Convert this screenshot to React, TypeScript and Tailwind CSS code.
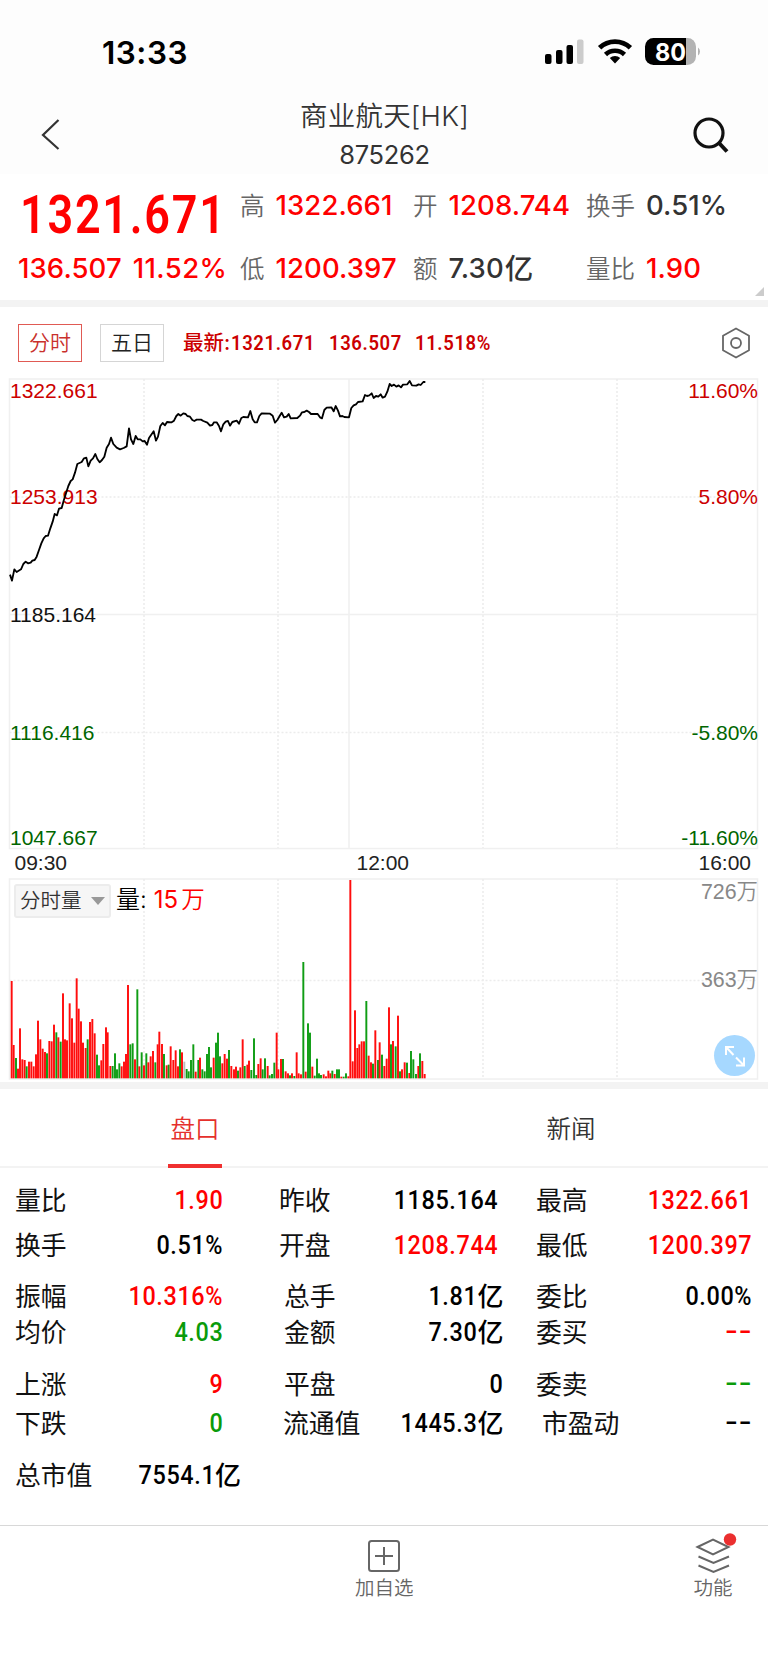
import React from 'react';

// Minute line, in thirds of a pixel from the chart's top left corner
const priceLine =
    '30,614 36,632 43,598 50,606 63,598 70,582 77,575 84,580 92,578 97,572 104,570 110,560 117,540 124,520 131,505 137,498 144,497 151,475 158,455 164,432 171,436 177,416 185,414 191,392 198,370 205,348 212,333 218,328 225,308 232,282 245,276 252,265 259,263 265,289 272,272 279,265 286,252 292,267 299,277 306,270 313,260 320,233 327,222 333,203 340,222 350,233 360,238 371,234 380,229 387,175 393,208 400,222 407,198 413,208 421,208 428,214 434,213 441,224 447,204 461,184 468,212 474,200 481,168 488,159 495,166 501,156 515,157 522,152 529,138 535,132 542,137 550,130 557,132 562,138 570,140 577,150 583,153 590,149 603,149 610,153 622,158 630,167 637,165 642,157 650,157 657,168 663,184 670,163 677,155 684,153 690,167 697,156 710,152 717,161 724,144 730,141 744,142 751,123 758,148 764,157 771,157 778,138 785,130 810,131 818,137 825,158 832,150 839,138 845,128 852,142 860,140 866,132 872,145 892,144 900,137 906,127 913,126 920,122 927,126 933,132 953,132 960,142 966,145 973,120 980,113 994,112 1001,124 1007,108 1014,122 1020,139 1027,138 1033,141 1047,142 1054,114 1061,106 1068,103 1074,96 1088,94 1095,75 1101,78 1108,76 1115,70 1121,84 1128,78 1135,80 1142,73 1148,83 1155,80 1162,65 1169,42 1175,48 1182,44 1189,50 1196,46 1203,52 1209,44 1222,43 1229,33 1236,46 1249,47 1256,43 1262,45 1270,36 1276,36';

// Volume bars as "x,top" plus r(ise), g(fall) or n(eutral), same units
const volumeBars =
    '35,333r 41,525r 48,564g 54,596r 60,475r 67,568r 74,570r 80,589g 87,575r 94,575r 101,589r 108,553r 114,452r 121,508r 128,536r 135,546r 141,550g 148,513r 155,514r 162,464r 169,487g 175,502r 182,515g 189,370r 195,508r 201,511r 209,400r 216,445r 223,518r 230,325r 236,416r 243,454r 249,518r 257,534r 263,508g 270,456r 277,447r 284,490r 291,554g 297,586g 304,571r 310,522r 318,472r 323,487r 331,588r 338,588g 345,550g 351,598g 358,580g 365,589r 372,575r 378,552r 384,345r 391,523g 398,520g 405,568r 412,358g 418,589r 425,547g 432,586r 439,550g 445,577r 452,559r 459,543r 466,577g 473,523r 478,485r 486,522r 492,552g 500,586r 506,584g 512,529r 520,570r 527,541r 534,589r 540,538g 546,547r 553,575n 560,597g 566,604g 573,570g 580,523g 587,605r 595,570g 600,563r 607,598g 614,604g 621,552g 627,531g 633,592g 641,563r 648,518g 654,488g 660,559g 667,580r 674,552r 681,566r 687,540g 694,588r 702,598r 708,590r 714,602g 721,592r 728,508r 734,588g 742,584r 747,572r 754,600g 762,505g 769,615g 775,582r 782,565r 788,598g 795,565g 803,588r 809,616g 816,612g 823,578g 830,488r 835,598r 843,567r 849,567g 857,604r 864,610r 870,616g 876,610r 883,618g 890,547r 896,610r 903,613r 910,276g 917,605r 924,460g 930,488g 937,590r 944,617g 951,566g 957,610g 963,615g 971,613r 978,619r 985,602r 991,610r 997,602g 1004,612r 1011,598g 1017,598g 1024,620r 1031,620g 1038,610g 1045,619r 1051,30r 1058,574r 1065,421r 1072,534r 1078,523r 1085,514r 1092,514r 1099,393g 1106,557r 1113,577r 1119,581g 1126,481r 1134,570g 1139,517r 1146,554g 1153,588r 1160,566r 1167,412r 1173,523g 1179,513r 1187,529g 1194,437r 1200,604g 1206,598r 1214,577r 1221,578g 1228,609r 1233,543g 1240,568g 1248,612g 1255,588r 1260,550g 1267,573r 1274,612r';

const barColors: Record<string, string> = { r: '#ff0d0d', g: '#0f9d14', n: '#bbbbbb' };

const bars = volumeBars.split(' ').map((item) => {
    const [x, top] = item.slice(0, -1).split(',').map(Number);
    return { x, top, fill: barColors[item.slice(-1)] };
});

interface Cell {
    label: string;
    value: string;
    unit?: string;
    color?: string;
    box: string;
}

const RED = 'text-[#ff0000]';
const GREEN = 'text-[#0a9b0a]';
const FIRST = 'ml-[15px] w-[208.500px]';
const THIRD = 'ml-[32.500px] w-[216.500px]';

const rows: { top: string; cells: Cell[] }[] = [
    {
        top: 'mt-[14px]',
        cells: [
            { label: '量比', value: '1.90', color: RED, box: FIRST },
            { label: '昨收', value: '1185.164', box: 'ml-[55.500px] w-[219px]' },
            { label: '最高', value: '1322.661', color: RED, box: 'ml-[38px] w-[216.500px]' },
        ],
    },
    {
        top: 'mt-[9px]',
        cells: [
            { label: '换手', value: '0.51%', color: 'text-black', box: FIRST },
            { label: '开盘', value: '1208.744', color: RED, box: 'ml-[55.500px] w-[219px]' },
            { label: '最低', value: '1200.397', color: RED, box: 'ml-[38px] w-[216.500px]' },
        ],
    },
    {
        top: 'mt-[15px]',
        cells: [
            { label: '振幅', value: '10.316%', color: RED, box: FIRST },
            { label: '总手', value: '1.81', unit: '亿', box: 'ml-[60.500px] w-[219.500px]' },
            { label: '委比', value: '0.00%', box: THIRD },
        ],
    },
    {
        top: 'mt-0',
        cells: [
            { label: '均价', value: '4.03', color: GREEN, box: FIRST },
            { label: '金额', value: '7.30', unit: '亿', box: 'ml-[60.500px] w-[219.500px]' },
            { label: '委买', value: '--', color: RED, box: THIRD },
        ],
    },
    {
        top: 'mt-[16px]',
        cells: [
            { label: '上涨', value: '9', color: RED, box: FIRST },
            { label: '平盘', value: '0', box: 'ml-[60.500px] w-[219.500px]' },
            { label: '委卖', value: '--', color: GREEN, box: THIRD },
        ],
    },
    {
        top: 'mt-[3px]',
        cells: [
            { label: '下跌', value: '0', color: GREEN, box: FIRST },
            { label: '流通值', value: '1445.3', unit: '亿', box: 'ml-[59.500px] w-[220.500px]' },
            { label: '市盈动', value: '--', box: 'ml-[38.500px] w-[210.500px]' },
        ],
    },
    {
        top: 'mt-[16px]',
        cells: [{ label: '总市值', value: '7554.1', unit: '亿', box: 'ml-[15px] w-[226px]' }],
    },
];

const StatusBar = () => (
    <div className="flex h-[102px] items-start pl-[102px] pr-[67px] pt-[33px]">
        <span className="text-[31.500px] font-semibold leading-[40px] tracking-[0.5px] text-black">13:33</span>
        <svg className="ml-auto mt-1" width="157" height="30" viewBox="544 37 157 30">
            <rect x="545" y="54" width="6.5" height="10" rx="2" />
            <rect x="556" y="50" width="6.5" height="14" rx="2" />
            <rect x="566.5" y="45" width="6.5" height="19" rx="2" />
            <rect x="577" y="39.5" width="6.5" height="24.5" rx="2" fill="#cccccc" />
            <path d="M615 63.5l-5.2-5.4a7.6 7.6 0 0 1 10.4 0z" />
            <path d="M605.5 54.5a13.8 13.8 0 0 1 19 0" fill="none" stroke="#000" strokeWidth="4.6" />
            <path d="M599.6 47.8a22.2 22.2 0 0 1 30.8 0" fill="none" stroke="#000" strokeWidth="4.8" />
            <path d="M653.500 38H686V65H653.500A8.500 8.500 0 0 1 645 56.500V46.500A8.500 8.500 0 0 1 653.500 38z" />
            <path d="M686 38h1.500a8.500 8.500 0 0 1 8.500 8.500v10a8.500 8.500 0 0 1-8.500 8.500H686z" fill="#b3b3b3" />
            <path d="M698 47.500a5 5 0 0 1 0 8z" fill="#b3b3b3" />
            <text x="655" y="60.500" fontSize="24.500" fontWeight="700" fill="#fff" textLength="31" lengthAdjust="spacingAndGlyphs">
                80
            </text>
        </svg>
    </div>
);

const TitleBar = () => (
    <div className="flex h-[72px] items-start justify-between pl-[40px] pr-[38px] text-[#333]">
        <svg className="mt-[16px]" width="20" height="32" viewBox="0 0 20 32" fill="none" stroke="#333" strokeWidth="2.200">
            <path d="M18.500 2L3 17l15.500 14" />
        </svg>
        <div className="flex flex-col items-center pl-[17px] pt-px">
            <h1 className="h-[28px] whitespace-nowrap text-[27.500px] font-[350] leading-[27px] tracking-[0.2px]">商业航天[HK]</h1>
            <span className="mt-[8px] text-[25.500px] font-normal leading-[32px] tracking-[-0.3px]">875262</span>
        </div>
        <svg className="mt-[14px]" width="38" height="38" viewBox="0 0 38 38" fill="none" stroke="#111" strokeWidth="3.200">
            <circle cx="17" cy="17" r="14" />
            <path d="M27 27l8 8.500" strokeWidth="4" />
        </svg>
    </div>
);

const Quote = ({ label, value, unit, color, box }: { label: string; value: string; unit?: string; color: string; box: string }) => (
    <div className={`flex items-center whitespace-nowrap ${box}`}>
        <span className="text-[24.500px] font-[350] text-[#666]">{label}</span>
        <span className={`ml-[11px] text-[27.500px] font-[480] tracking-[0.1px] ${color}`}>{value}</span>
        {unit && <span className={`ml-px text-[28.500px] font-medium leading-[40px] ${color}`}>{unit}</span>}
    </div>
);

const Summary = () => (
    <section className="relative flex h-[126px] bg-white">
        <div className="w-[240px] pl-[18px]">
            <div className="mt-[8px] h-[67px] pl-[2px]">
                <span className="inline-block origin-left scale-x-[0.84] font-['Roboto'] text-[53.500px] font-semibold leading-[66px] tracking-[2.100px] text-[#ff0000]">
                    1321.671
                </span>
            </div>
            <div className="flex h-[40px] items-center whitespace-nowrap text-[27.500px] font-[480] tracking-[0.100px] text-[#ff0000]">
                <span>136.507</span>
                <span className="ml-[11px] tracking-[0.400px]">11.52%</span>
            </div>
        </div>
        <div className="pt-[12px]">
            <div className="flex h-[40px]">
                <Quote label="高" value="1322.661" color="text-[#ff0000]" box="w-[173px]" />
                <Quote label="开" value="1208.744" color="text-[#ff0000]" box="w-[173px]" />
                <Quote label="换手" value="0.51%" color="text-[#333]" box="w-[160px]" />
            </div>
            <div className="mt-[23px] flex h-[40px]">
                <Quote label="低" value="1200.397" color="text-[#ff0000]" box="w-[173px]" />
                <Quote label="额" value="7.30" unit="亿" color="text-[#333]" box="w-[173px]" />
                <Quote label="量比" value="1.90" color="text-[#ff0000]" box="w-[160px]" />
            </div>
        </div>
        <svg className="absolute bottom-[4px] right-[4px]" width="9" height="9" viewBox="0 0 9 9" fill="#ccc">
            <path d="M9 0v9H0z" />
        </svg>
    </section>
);

const Toolbar = () => (
    <div className="flex h-[63px] items-start pl-[18px] pr-[17px] pt-[17px]">
        <button className="h-[38px] w-[64px] border border-[#e05a54] text-[21px] font-[350] leading-[36px] text-[#c9302c]">分时</button>
        <button className="ml-[18px] h-[38px] w-[64px] border border-[#d5d5d5] text-[21px] font-[350] leading-[36px] text-[#222]">
            五日
        </button>
        <div className="ml-[19px] flex h-[38px] items-center whitespace-nowrap text-[20.500px] font-medium text-[#cc0000]">
            <span className="w-[48px]">最新:</span>
            <Ticker text="1321.671" box="w-[98px]" />
            <Ticker text="136.507" box="w-[86px]" />
            <Ticker text="11.518%" box="w-[80px]" />
        </div>
        <svg className="ml-auto mt-[3px]" width="30" height="32" viewBox="0 0 30 32" fill="none" stroke="#666" strokeWidth="1.800">
            <path d="M15 1.500l13 7.300v14.400l-13 7.300-13-7.300V8.800z" strokeLinejoin="round" />
            <circle cx="15" cy="16" r="5" />
        </svg>
    </div>
);

const Ticker = ({ text, box }: { text: string; box: string }) => (
    <span className={box}>
        <span className="inline-block origin-left scale-x-[0.9] font-['Roboto'] font-semibold tracking-[0.7px]">{text}</span>
    </span>
);

const verticals = [144, 278, 483, 617];

const PriceChart = () => (
    <svg className="block font-['Liberation_Sans']" width="768" height="505" viewBox="0 0 768 505" fontSize="21">
        <g fill="none" stroke="#f0f0f0" strokeWidth="1.500">
            <rect x="9.500" y="9" width="748" height="469.500" />
            <path d="M349 9v469M9.500 244.500h748" />
            <g stroke="#ececec" strokeDasharray="2 2">
                {verticals.map((x) => (
                    <path key={x} d={`M${x} 9v469`} />
                ))}
                <path d="M9.500 127h748M9.500 362.500h748" />
            </g>
        </g>
        <g fill="#cc0000">
            <text x="10" y="28">1322.661</text>
            <text x="10" y="134">1253.913</text>
            <text x="758" y="28" textAnchor="end">11.60%</text>
            <text x="758" y="134" textAnchor="end">5.80%</text>
        </g>
        <text x="10" y="251.500" fill="#111">1185.164</text>
        <g fill="#006600">
            <text x="10" y="369.500">1116.416</text>
            <text x="10" y="474.500">1047.667</text>
            <text x="758" y="369.500" textAnchor="end">-5.80%</text>
            <text x="758" y="474.500" textAnchor="end">-11.60%</text>
        </g>
        <polyline points={priceLine} transform="scale(0.33333)" fill="none" stroke="#000" strokeWidth="5.500" strokeLinejoin="round" />
        <g fill="#222">
            <text x="14.500" y="500">09:30</text>
            <text x="356.500" y="500">12:00</text>
            <text x="698.500" y="500">16:00</text>
        </g>
    </svg>
);

const VolumeChart = () => (
    <div className="relative h-[207px]">
        <svg className="block font-['Liberation_Sans','Noto_Sans_CJK_SC']" width="768" height="207" viewBox="0 5 768 207" fontSize="21">
            <g fill="none" stroke="#f0f0f0" strokeWidth="1.500">
                <rect x="9.500" y="9" width="748" height="200" />
                <g stroke="#ececec" strokeDasharray="2 2">
                    {verticals.map((x) => (
                        <path key={x} d={`M${x} 9v200`} />
                    ))}
                    <path d="M9.500 110.500h748" />
                </g>
            </g>
            <g transform="scale(0.33333)">
                {bars.map((bar) => (
                    <rect key={bar.x} x={bar.x - 2.9} y={bar.top} width="5.800" height={625 - bar.top} fill={bar.fill} />
                ))}
            </g>
            <g fill="#888" fontWeight="350" fontSize="21.400">
                <text x="758" y="28.500" textAnchor="end">726万</text>
                <text x="758" y="116.500" textAnchor="end">363万</text>
            </g>
        </svg>
        <div className="absolute left-[14px] top-[8px] flex h-[35px] items-center whitespace-nowrap">
            <div className="flex h-[34px] w-[97px] items-center justify-between rounded-[3px] border-2 border-[#ececec] bg-[#f6f6f6] pl-[4px] pr-[4px] pt-px text-[20.500px] font-[350] text-[#333]">
                分时量
                <svg width="14" height="8" viewBox="0 0 14 8" fill="#999">
                    <path d="M0 0h14L7 8z" />
                </svg>
            </div>
            <span className="mb-px ml-[5px] text-[24px] font-[350] text-black">量:</span>
            <span className="mb-px ml-[7px] text-[24px] font-normal text-[#ff0000]">15</span>
            <span className="mb-px ml-[3px] text-[23.500px] font-[350] text-[#ff0000]">万</span>
        </div>
        <button className="absolute bottom-[6px] right-[13px] flex size-[41px] items-center justify-center rounded-full bg-[#a6d8ff]">
            <svg width="22" height="22" viewBox="0 0 22 22" fill="none" stroke="#fff" strokeWidth="2">
                <path d="M10 2H2v8M2 2l7.500 8M12 20.500h8v-8M20 20.500l-8-8" />
            </svg>
        </button>
    </div>
);

const Tabs = () => (
    <div className="flex h-[79px] justify-between border-b-2 border-[#f3f3f3] pl-[168px] pr-[170px] text-[24.500px] font-[350] leading-[36px]">
        <div className="flex h-[79px] w-[54px] justify-center whitespace-nowrap border-b-[4px] border-[#f03030] pt-[22px] text-[#e5302c]">盘口</div>
        <div className="flex h-[79px] w-[54px] justify-center whitespace-nowrap pt-[22px] text-[#333]">新闻</div>
    </div>
);

const CellValue = ({ value }: { value: string }) =>
    value === '--' ? (
        <span className="mb-[2px] origin-right scale-x-[1.4] font-['Roboto'] font-medium tracking-[1px]">{value}</span>
    ) : (
        <span className="origin-right scale-x-[0.9] font-['Roboto'] font-[550] tracking-[0.7px]">{value}</span>
    );

const DataRow = ({ cells, top }: { cells: Cell[]; top: string }) => (
    <div className={`flex h-[36px] ${top}`}>
        {cells.map((cell) => (
            <div key={cell.label} className={`flex items-center justify-between whitespace-nowrap ${cell.box}`}>
                <span className="mt-[2px] text-[25.800px] text-[#111]">{cell.label}</span>
                <span className={`flex items-center text-[26px] ${cell.color || 'text-black'}`}>
                    <CellValue value={cell.value} />
                    {cell.unit && <span className="font-medium">{cell.unit}</span>}
                </span>
            </div>
        ))}
    </div>
);

const BottomBar = () => (
    <footer className="mt-[32px] flex h-[158px] justify-between border-t-[1px] border-[#d8d8d8] pl-[355px] pr-[34px] text-[19.500px] leading-[26px] text-[#666]">
        <div className="flex flex-col items-center whitespace-nowrap pt-[14px]">
            <svg width="32" height="32" viewBox="0 0 32 32" fill="none" stroke="#666" strokeWidth="2">
                <rect x="1" y="1" width="30" height="30" rx="2.500" />
                <path d="M16 7v18M7 16h18" />
            </svg>
            <span className="mt-[3px] font-[350]">加自选</span>
        </div>
        <div className="flex flex-col items-center whitespace-nowrap pt-[7px]">
            <svg className="overflow-visible" width="42" height="42" viewBox="0 0 42 42" fill="none" stroke="#666" strokeWidth="2">
                <path d="M5.500 14l15.500-7.500L36.500 14 21 21.500zM6.500 23.500l15 6.500L37 23.500M6.500 32.500l15 6.500L37 32.500" />
                <circle cx="38" cy="6.500" r="6.200" fill="#eb2f2f" stroke="none" />
            </svg>
            <span className="font-[350]">功能</span>
        </div>
    </footer>
);

export default function App() {
    return (
        <main className="h-[1665px] w-[768px] overflow-hidden bg-white font-['Inter','Noto_Sans_CJK_SC',sans-serif]">
            <header className="bg-[#fdfdfd]">
                <StatusBar />
                <TitleBar />
            </header>
            <Summary />
            <div className="h-[7px] bg-[#f3f3f3]" />
            <Toolbar />
            <PriceChart />
            <VolumeChart />
            <div className="h-[7px] bg-[#f3f3f3]" />
            <Tabs />
            <section>
                {rows.map((row) => (
                    <DataRow key={row.cells[0].label} cells={row.cells} top={row.top} />
                ))}
            </section>
            <BottomBar />
        </main>
    );
}
